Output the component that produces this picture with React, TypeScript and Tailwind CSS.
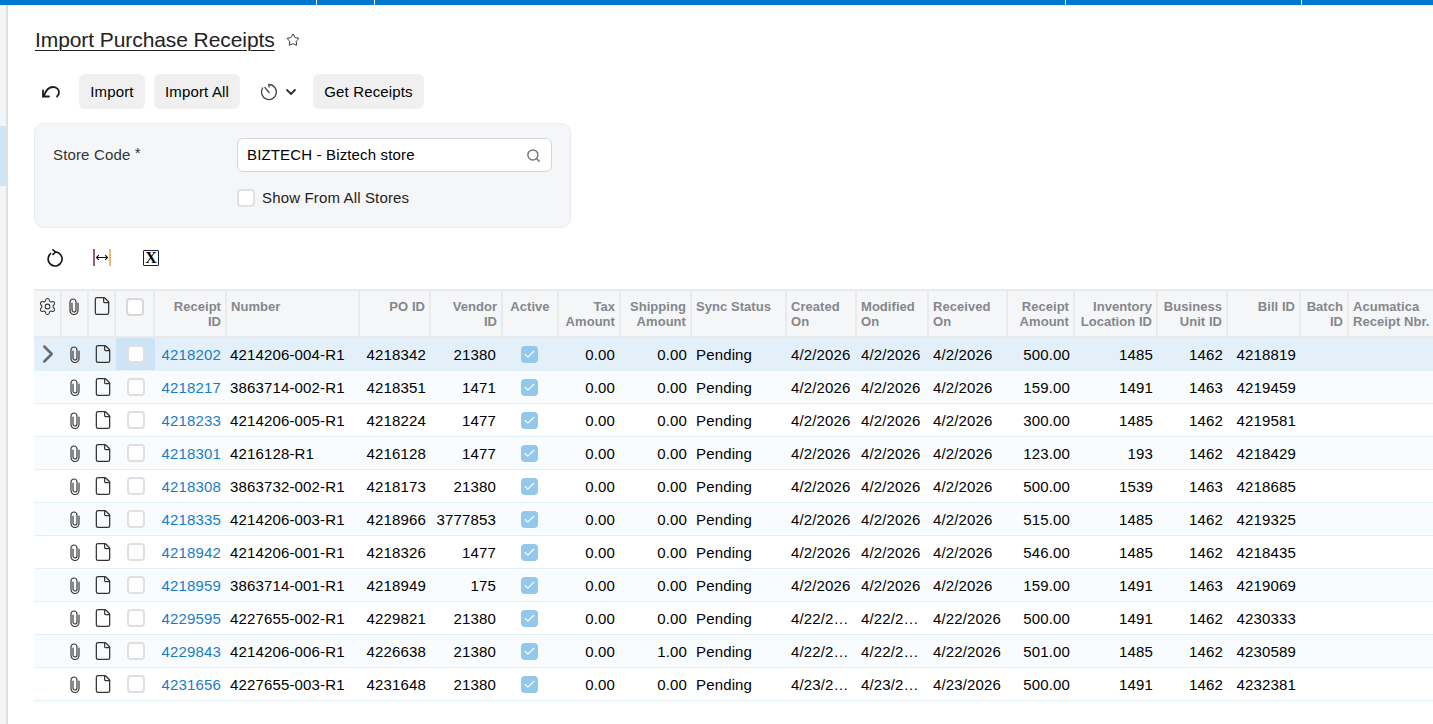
import React from 'react';
import { ChevronDown, ChevronRight, File, Check, Search, Settings, Star } from 'lucide-react';

interface Receipt {
  id: string;
  number: string;
  po: string;
  vendor: string;
  shipping: string;
  created: string;
  received: string;
  amount: string;
  location: string;
  unit: string;
  bill: string;
}

const receipts: Receipt[] = [
  { id: '4218202', number: '4214206-004-R1', po: '4218342', vendor: '21380', shipping: '0.00', created: '4/2/2026', received: '4/2/2026', amount: '500.00', location: '1485', unit: '1462', bill: '4218819' },
  { id: '4218217', number: '3863714-002-R1', po: '4218351', vendor: '1471', shipping: '0.00', created: '4/2/2026', received: '4/2/2026', amount: '159.00', location: '1491', unit: '1463', bill: '4219459' },
  { id: '4218233', number: '4214206-005-R1', po: '4218224', vendor: '1477', shipping: '0.00', created: '4/2/2026', received: '4/2/2026', amount: '300.00', location: '1485', unit: '1462', bill: '4219581' },
  { id: '4218301', number: '4216128-R1', po: '4216128', vendor: '1477', shipping: '0.00', created: '4/2/2026', received: '4/2/2026', amount: '123.00', location: '193', unit: '1462', bill: '4218429' },
  { id: '4218308', number: '3863732-002-R1', po: '4218173', vendor: '21380', shipping: '0.00', created: '4/2/2026', received: '4/2/2026', amount: '500.00', location: '1539', unit: '1463', bill: '4218685' },
  { id: '4218335', number: '4214206-003-R1', po: '4218966', vendor: '3777853', shipping: '0.00', created: '4/2/2026', received: '4/2/2026', amount: '515.00', location: '1485', unit: '1462', bill: '4219325' },
  { id: '4218942', number: '4214206-001-R1', po: '4218326', vendor: '1477', shipping: '0.00', created: '4/2/2026', received: '4/2/2026', amount: '546.00', location: '1485', unit: '1462', bill: '4218435' },
  { id: '4218959', number: '3863714-001-R1', po: '4218949', vendor: '175', shipping: '0.00', created: '4/2/2026', received: '4/2/2026', amount: '159.00', location: '1491', unit: '1463', bill: '4219069' },
  { id: '4229595', number: '4227655-002-R1', po: '4229821', vendor: '21380', shipping: '0.00', created: '4/22/2026', received: '4/22/2026', amount: '500.00', location: '1491', unit: '1462', bill: '4230333' },
  { id: '4229843', number: '4214206-006-R1', po: '4226638', vendor: '21380', shipping: '1.00', created: '4/22/2026', received: '4/22/2026', amount: '501.00', location: '1485', unit: '1462', bill: '4230589' },
  { id: '4231656', number: '4227655-003-R1', po: '4231648', vendor: '21380', shipping: '0.00', created: '4/23/2026', received: '4/23/2026', amount: '500.00', location: '1491', unit: '1462', bill: '4232381' },
];

const gridCols =
  'grid grid-cols-[28px_27px_27px_39px_72px_133px_71px_72px_56px_62px_71px_95px_70px_72px_79px_67px_83px_70px_73px_48px_85px]';

function Paperclip() {
  return (
    <svg width="10" height="17" viewBox="0 0 10 17" fill="none" stroke="#3a3a3a" strokeWidth="1.2" strokeLinecap="round">
      <path d="M9 5v7.5a4 4 0 0 1-8 0V4a3 3 0 0 1 6 0v8a2 2 0 0 1-4 0V5" />
    </svg>
  );
}

function UndoIcon() {
  return (
    <svg width="20" height="16" viewBox="0 0 20 16" fill="none" stroke="#1c1c1c" strokeWidth="1.8" strokeLinecap="round">
      <path d="M3 11.5C5 6 8 3 12 3c3.5 0 6 2.4 6 5.2 0 1.8-.8 3.2-2 4.3" />
      <path d="M2 6.5v6h6" strokeLinejoin="miter" />
    </svg>
  );
}

function TimerIcon() {
  return (
    <svg width="18" height="18" viewBox="0 0 18 18" fill="none" stroke="#444" strokeWidth="1.3" strokeLinecap="round">
      <path d="M9 1.5A7.5 7.5 0 1 1 2.6 5" />
      <path d="M9 9.5 4.8 4.4" />
      <path d="M9 1.5v2.4" />
    </svg>
  );
}

function RefreshIcon() {
  return (
    <svg width="18" height="18" viewBox="0 0 18 18" fill="none" stroke="#111" strokeWidth="1.6" strokeLinecap="round" strokeLinejoin="round">
      <path d="M9.5 3A7 7 0 1 1 4.6 4.6" />
      <path d="M7 .8 9.6 3 7 5.4" />
    </svg>
  );
}

function FitColumnsIcon() {
  return (
    <svg width="18" height="17" viewBox="0 0 18 17" fill="none">
      <path d="M1 0v17" stroke="#5a1f4a" strokeWidth="1.4" />
      <path d="M17 0v17" stroke="#f09a2a" strokeWidth="1.4" />
      <path d="M3.5 8.5h11M5.8 6.2l-2.3 2.3 2.3 2.3M12.2 6.2l2.3 2.3-2.3 2.3" stroke="#111" strokeWidth="1.1" />
    </svg>
  );
}

function ExcelIcon() {
  return (
    <div className="flex h-[16px] w-[16px] items-center justify-center rounded-[1px] border-[1.5px] border-[#16233a] font-['Liberation_Serif',serif] text-[16px] leading-none font-bold tracking-normal text-black">
      X
    </div>
  );
}

function CheckBox({ strong }: { strong?: boolean }) {
  return (
    <div
      className={`h-[18px] w-[18px] rounded-[4px] border-2 bg-white ${strong ? 'border-[#d8d8dc]' : 'border-[#e0e0e2]'}`}
    />
  );
}

function HeaderCell({ children, right, last }: { children: React.ReactNode; right?: boolean; last?: boolean }) {
  return (
    <div
      className={`pt-[8px] text-[13px] leading-[15px] font-bold tracking-[0.05px] text-[#85878c] ${
        last ? '' : 'border-r-2 border-[#e9eaec]'
      } ${right ? 'pr-[4px] text-right' : 'pl-[4px]'}`}
    >
      {children}
    </div>
  );
}

function IconCell({ children }: { children: React.ReactNode }) {
  return <div className="flex items-center justify-center">{children}</div>;
}

function TextCell({ children, right, className }: { children?: React.ReactNode; right?: boolean; className?: string }) {
  return (
    <div className={`truncate leading-[33px] ${right ? 'text-right' : 'text-left'} ${className ?? ''}`}>{children}</div>
  );
}

function ReceiptRow({ row, index }: { row: Receipt; index: number }) {
  const selected = index === 0;
  const tint = selected ? 'bg-[#e3f0f9]' : index % 2 === 1 ? 'bg-[#f8fcfe]' : 'bg-white';
  return (
    <div className={`${gridCols} h-[33px] border-b border-[#e3f0f8] ${tint}`}>
      <IconCell>
        {selected && <ChevronRight className="h-[30px] w-[30px] shrink-0 text-[#666b6f]" strokeWidth={2} />}
      </IconCell>
      <div className="flex items-center justify-center pr-[2px]">
        <Paperclip />
      </div>
      <IconCell>
        <File className="h-[20px] w-[20px] text-[#333]" strokeWidth={1.5} />
      </IconCell>
      <div className={`flex items-center justify-center ${selected ? 'bg-[#cce4f3]' : ''}`}>
        <CheckBox />
      </div>
      <TextCell right className="pr-[6px] text-[#1a7cc7]">
        {row.id}
      </TextCell>
      <TextCell className="pl-[3px]">{row.number}</TextCell>
      <TextCell right className="pr-[5px]">
        {row.po}
      </TextCell>
      <TextCell right className="pr-[7px]">
        {row.vendor}
      </TextCell>
      <div className="flex items-center justify-center pr-[3px]">
        <div className="flex h-[17px] w-[17px] items-center justify-center rounded-[4px] bg-[#93c8ec]">
          <Check className="h-[13px] w-[13px] text-white" strokeWidth={2} />
        </div>
      </div>
      <TextCell right className="pr-[6px]">
        0.00
      </TextCell>
      <TextCell right className="pr-[5px]">
        {row.shipping}
      </TextCell>
      <TextCell className="pl-[4px]">Pending</TextCell>
      <TextCell className="pl-[4px]">{row.created}</TextCell>
      <TextCell className="pl-[4px] pr-[4px]">{row.created}</TextCell>
      <TextCell className="pl-[4px]">{row.received}</TextCell>
      <TextCell right className="pr-[5px]">
        {row.amount}
      </TextCell>
      <TextCell right className="pr-[5px]">
        {row.location}
      </TextCell>
      <TextCell right className="pr-[5px]">
        {row.unit}
      </TextCell>
      <TextCell right className="pr-[5px]">
        {row.bill}
      </TextCell>
      <TextCell />
      <TextCell />
    </div>
  );
}

export default function App() {
  return (
    <div className="h-[724px] w-[1433px] overflow-hidden bg-white font-['Liberation_Sans',Arial,sans-serif] text-[15px] tracking-[0.15px] text-black">
      <div className="flex h-[5px] bg-[#0078cf]">
        <div className="w-[317px] border-r border-white" />
        <div className="w-[58px] border-r border-white" />
        <div className="w-[691px] border-r border-white" />
        <div className="w-[236px] border-r border-white" />
      </div>

      <div className="flex h-[719px]">
        <div className="w-[8px] shrink-0 border-r-2 border-[#dcdfe4] bg-[#f4f5f7] pt-[121px]">
          <div className="h-[60px] bg-[#cfe5f4]" />
        </div>

        <div className="min-w-0 flex-1 pl-[26px]">
          <div className="flex items-center pt-[21px]">
            <h1 className="ml-[1px] text-[21px] leading-[28px] font-normal tracking-[-0.08px] text-[#222] underline decoration-1 underline-offset-[3px]">
              Import Purchase Receipts
            </h1>
            <Star className="ml-[11px] h-[14px] w-[14px] text-[#222]" strokeWidth={1.6} />
          </div>

          <div className="mt-[20px] flex h-[35px] items-center">
            <div className="flex w-[45px] justify-start pl-[7px]">
              <UndoIcon />
            </div>
            <button className="h-[35px] w-[66px] rounded-[6px] bg-[#f0f0f0] pt-[1px]">Import</button>
            <button className="ml-[9px] h-[35px] w-[86px] rounded-[6px] bg-[#f0f0f0] pt-[1px]">Import All</button>
            <div className="ml-[20px] flex w-[53px] items-center">
              <TimerIcon />
              <ChevronDown className="ml-[5px] h-[16px] w-[16px] text-[#333]" strokeWidth={2.8} />
            </div>
            <button className="h-[35px] w-[111px] rounded-[6px] bg-[#f0f0f0] pt-[1px]">Get Receipts</button>
          </div>

          <div className="mt-[14px] h-[105px] w-[537px] rounded-[10px] border border-[#eaebee] bg-[#f5f6f8] pt-[14px] pl-[18px]">
            <div className="flex h-[34px] items-center">
              <div className="w-[184px] text-[#333]">
                Store Code <span className="relative top-[-2px]">*</span>
              </div>
              <div className="flex h-[34px] w-[315px] items-center justify-between rounded-[6px] border border-[#d4d5d8] bg-white pr-[10px] pl-[9px]">
                <span>BIZTECH - Biztech store</span>
                <Search className="h-[15px] w-[15px] text-[#77797d]" strokeWidth={2.4} />
              </div>
            </div>
            <div className="mt-[15px] flex items-center pl-[184px]">
              <CheckBox />
              <span className="ml-[7px] text-[#222]">Show From All Stores</span>
            </div>
          </div>

          <div className="mt-[21px] flex h-[17px] items-center">
            <div className="ml-[12px]">
              <RefreshIcon />
            </div>
            <div className="ml-[29px]">
              <FitColumnsIcon />
            </div>
            <div className="ml-[32px]">
              <ExcelIcon />
            </div>
          </div>

          <div className="mt-[23px]">
            <div className={`${gridCols} h-[49px] border-y-2 border-[#e9eaec] bg-[#f5f6f8]`}>
              <div className="flex justify-center border-r-2 border-[#e9eaec] pt-[6px]">
                <Settings className="h-[19px] w-[19px] text-[#333]" strokeWidth={1.3} />
              </div>
              <div className="flex justify-center border-r-2 border-[#e9eaec] pt-[7px] pr-[1px]">
                <Paperclip />
              </div>
              <div className="flex justify-center border-r-2 border-[#e9eaec] pt-[5px]">
                <File className="h-[20px] w-[20px] text-[#333]" strokeWidth={1.5} />
              </div>
              <div className="flex justify-center border-r-2 border-[#e9eaec] pt-[7px]">
                <CheckBox strong />
              </div>
              <HeaderCell right>
                Receipt
                <br />
                ID
              </HeaderCell>
              <HeaderCell>Number</HeaderCell>
              <HeaderCell right>PO ID</HeaderCell>
              <HeaderCell right>
                Vendor
                <br />
                ID
              </HeaderCell>
              <div className="border-r-2 border-[#e9eaec] pt-[8px] text-center text-[13px] leading-[15px] font-bold tracking-[0.05px] text-[#85878c]">
                Active
              </div>
              <HeaderCell right>
                Tax
                <br />
                Amount
              </HeaderCell>
              <HeaderCell right>
                Shipping
                <br />
                Amount
              </HeaderCell>
              <HeaderCell>Sync Status</HeaderCell>
              <HeaderCell>
                Created
                <br />
                On
              </HeaderCell>
              <HeaderCell>
                Modified
                <br />
                On
              </HeaderCell>
              <HeaderCell>
                Received
                <br />
                On
              </HeaderCell>
              <HeaderCell right>
                Receipt
                <br />
                Amount
              </HeaderCell>
              <HeaderCell right>
                Inventory
                <br />
                Location ID
              </HeaderCell>
              <HeaderCell right>
                Business
                <br />
                Unit ID
              </HeaderCell>
              <HeaderCell right>Bill ID</HeaderCell>
              <HeaderCell right>
                Batch
                <br />
                ID
              </HeaderCell>
              <div className="overflow-hidden pt-[8px] pl-[4px] text-[13px] leading-[15px] font-bold tracking-[0.05px] whitespace-nowrap text-[#85878c]">
                Acumatica
                <br />
                Receipt Nbr.
              </div>
            </div>

            {receipts.map((row, index) => (
              <ReceiptRow key={row.id} row={row} index={index} />
            ))}
          </div>
        </div>
      </div>
    </div>
  );
}
